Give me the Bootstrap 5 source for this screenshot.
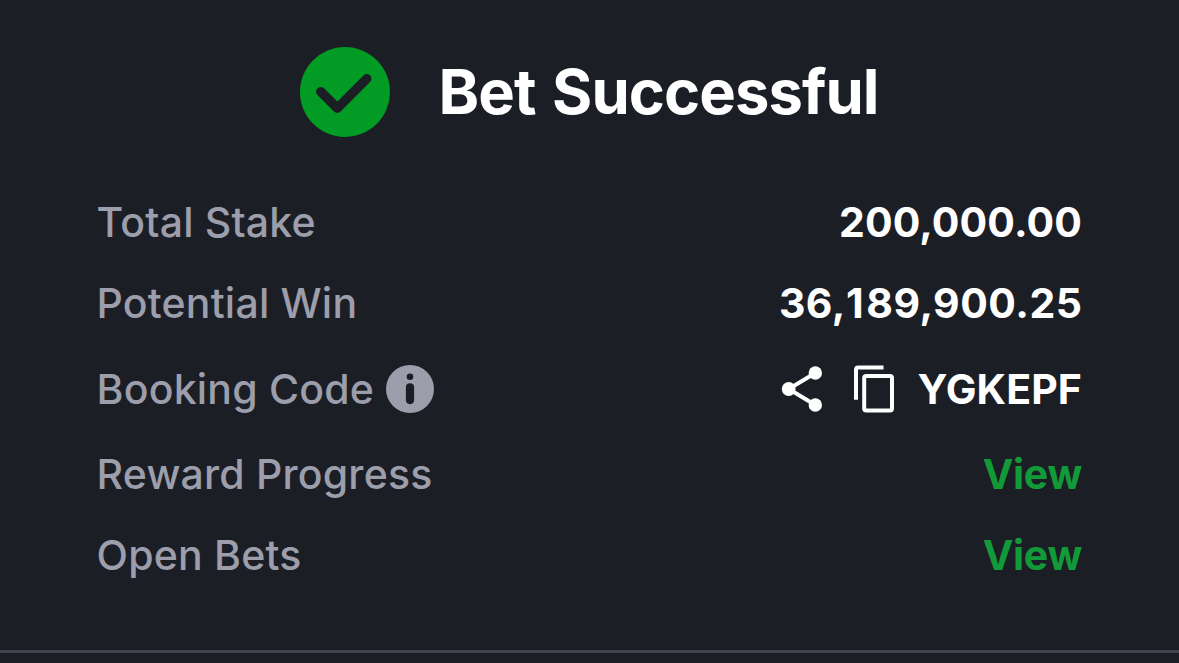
<!DOCTYPE html>
<html lang="en">
<head>
<meta charset="utf-8">
<meta name="viewport" content="width=device-width, initial-scale=1">
<title>Bet Successful</title>
<link href="https://cdn.jsdelivr.net/npm/bootstrap@5.3.0/dist/css/bootstrap.min.css" rel="stylesheet">
<style>
  body { background: #1c1e26; color: #fff; font-family: Inter, "Liberation Sans", sans-serif; }
  .slip { height: 653px; padding-top: 47px; border-bottom: 3px solid #42434d; }
  .slip-head { height: 90px; padding-left: 300px; margin-bottom: 45px; }
  .slip-title { font-size: 61.5px; font-weight: 700; line-height: 1; margin-left: 48.5px; letter-spacing: -.95px; word-spacing: 3px; }
  .slip-rows { padding: 0 97px; font-size: 41px; line-height: 1; }
  .slip-row { height: 81px; }
  .slip-row.code { height: 90px; }
  .key { color: #9c9eab; font-weight: 500; letter-spacing: .2px; margin-left: -.4px; }
  .val { font-weight: 700; letter-spacing: .1px; }
  .val.win { letter-spacing: .5px; margin-right: -.5px; }
  .val.win span { letter-spacing: 2.6px; }
  .view { color: #129a38; text-decoration: none; letter-spacing: -.3px; }
  .info { margin-left: 12px; }
  .copy { margin: 0 22px 0 30px; }
  svg { display: block; flex: none; }
</style>
</head>
<body class="overflow-hidden">
<main class="slip">
  <header class="slip-head d-flex align-items-center">
    <svg width="90" height="90" viewBox="0 0 90 90" aria-hidden="true">
      <circle cx="45" cy="45" r="45" fill="#029b23"/>
      <path d="M20.700 44.700 37.300 61.200 66.700 31.700" fill="none" stroke="#1c1e26" stroke-width="9.400" stroke-linecap="round" stroke-linejoin="round"/>
    </svg>
    <h1 class="slip-title mb-0 text-nowrap">Bet Successful</h1>
  </header>
  <div class="slip-rows">
    <div class="slip-row d-flex align-items-center justify-content-between">
      <span class="key">Total Stake</span><span class="val">200,000.00</span>
    </div>
    <div class="slip-row d-flex align-items-center justify-content-between">
      <span class="key">Potential Win</span><span class="val win">36,<span>1</span>89,900.25</span>
    </div>
    <div class="slip-row code d-flex align-items-center justify-content-between">
      <div class="d-flex align-items-center">
        <span class="key">Booking Code</span>
        <svg class="info" width="48" height="48" viewBox="0 0 48 48" aria-hidden="true">
          <circle cx="24" cy="24" r="24" fill="#9c9eab"/>
          <circle cx="24" cy="11.700" r="3.300" fill="#1c1e26"/>
          <rect x="19.900" y="18.200" width="8.200" height="21" rx="4.100" fill="#1c1e26"/>
        </svg>
      </div>
      <div class="d-flex align-items-center">
        <svg width="42" height="48" viewBox="781 365 42 48" aria-hidden="true">
          <path d="M815.300 373 788.700 389 815.300 405" fill="none" stroke="#fff" stroke-width="4"/>
          <g fill="#fff"><circle cx="815.300" cy="373" r="6.700"/><circle cx="788.700" cy="389" r="6.900"/><circle cx="815.300" cy="405" r="6.700"/></g>
        </svg>
        <svg class="copy" width="42" height="48" viewBox="853 365 42 48" aria-hidden="true">
          <g fill="none" stroke="#fff" stroke-width="4"><path d="M856 399.800V369.800Q856 367.500 858.300 367.500H883.500"/><rect x="864.200" y="376" width="27.800" height="34.400" rx="2"/></g>
        </svg>
        <span class="val">YGKEPF</span>
      </div>
    </div>
    <div class="slip-row d-flex align-items-center justify-content-between">
      <span class="key">Reward Progress</span><a class="val view" href="#">View</a>
    </div>
    <div class="slip-row d-flex align-items-center justify-content-between">
      <span class="key">Open Bets</span><a class="val view" href="#">View</a>
    </div>
  </div>
</main>
<script src="https://cdn.jsdelivr.net/npm/bootstrap@5.3.0/dist/js/bootstrap.bundle.min.js"></script>
</body>
</html>
